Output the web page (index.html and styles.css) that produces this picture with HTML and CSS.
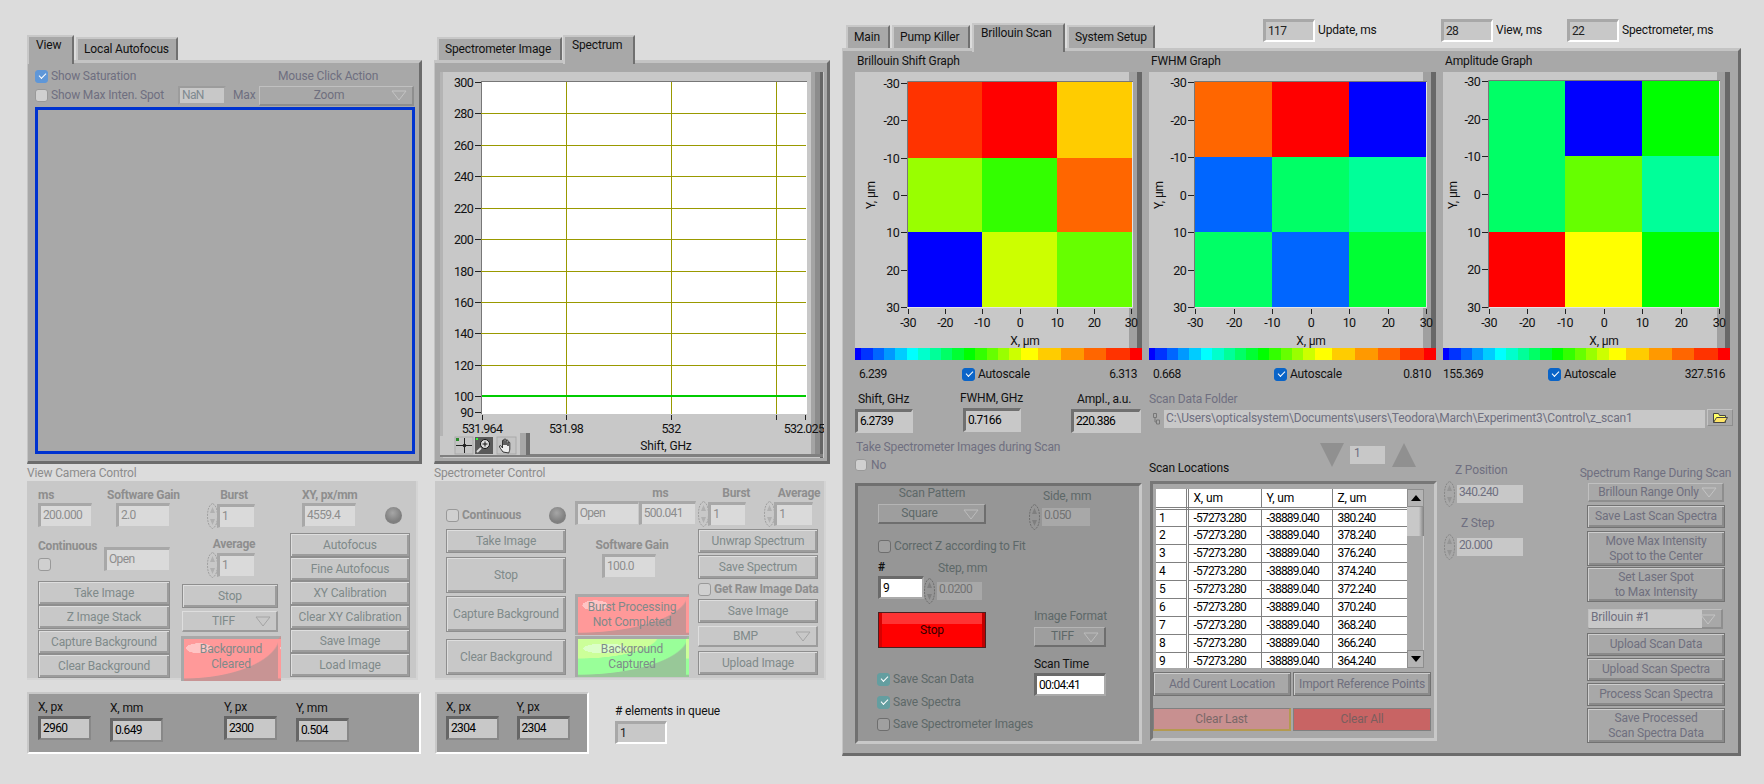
FILE: index.html
```html
<!DOCTYPE html>
<html lang="en">
  <head>
    <meta charset="UTF-8" />
    <title>Brillouin Scan</title>
    <link rel="stylesheet" href="styles.css">
  </head>
  <body>
    <svg class="defs">
      <symbol id="spinner" viewBox="0 0 11 26">
        <path d="M5.5 .5C2 2 .5 7 .5 13s1.500 11 5 12.500c3.500-1.500 5-6.500 5-12.500S9 2 5.500 .5z" fill="none" stroke="currentColor" stroke-dasharray="2 1"/>
        <path d="M5.500 4 3 10h5zM3 16l2.500 6L8 16z" fill="currentColor" opacity=".6"/>
      </symbol>
      <symbol id="drop" viewBox="0 0 16 11">
        <path d="M1 1h14L8 10z" fill="none" stroke="currentColor"/>
      </symbol>
    </svg>
    <div class="page">

      <!-- camera column -->
      <div class="col-view">
        <div class="tabs">
          <div class="tab sel tab-view">View</div>
          <div class="tab tab-focus">Local Autofocus</div>
        </div>
        <div class="tabpanel view-panel">
          <div class="view-row1">
            <div class="chk-line off-txt sat-line"><span class="check on blue"></span>Show Saturation</div>
            <div class="off-txt mouse-lab">Mouse Click Action</div>
          </div>
          <div class="view-row2">
            <div class="chk-line off-txt spot-line"><span class="check"></span>Show Max Inten. Spot</div>
            <div class="field f-nan">NaN</div>
            <div class="off-txt max-lab">Max</div>
            <div class="menu gr m-zoom">Zoom<svg class="drop"><use href="#drop"/></svg></div>
          </div>
          <div class="camera-frame"></div>
        </div>

        <div class="sect-lab">View Camera Control</div>
        <div class="ctrl cam-ctrl">
          <div class="cam-a">
            <div class="cam-a1">
              <div class="g-ms"><div class="blab">ms</div><div class="field f-54">200.000</div></div>
              <div class="g-gain"><div class="blab">Software Gain</div><div class="field f-54 gain-f">2.0</div></div>
            </div>
            <div class="cam-a2">
              <div class="g-cont"><div class="blab">Continuous</div><span class="check"></span></div>
              <div class="field f-open">Open</div>
            </div>
            <div class="btn b24">Take Image</div>
            <div class="btn b24">Z Image Stack</div>
            <div class="btn b24 mt1">Capture Background</div>
            <div class="btn b24">Clear Background</div>
          </div>
          <div class="cam-b">
            <div class="blab center">Burst</div>
            <div class="spin-row"><svg class="spin"><use href="#spinner"/></svg><div class="field f-38">1</div></div>
            <div class="blab center avg-lab">Average</div>
            <div class="spin-row"><svg class="spin"><use href="#spinner"/></svg><div class="field f-38">1</div></div>
            <div class="btn b24 cam-stop">Stop</div>
            <div class="menu m-tiff">TIFF<svg class="drop"><use href="#drop"/></svg></div>
            <div class="led red led-cam">Background<br>Cleared</div>
          </div>
          <div class="cam-c">
            <div class="xy-row">
              <div><div class="blab">XY, px/mm</div><div class="field f-54">4559.4</div></div>
              <span class="lamp lamp-cam"></span>
            </div>
            <div class="btn b24">Autofocus</div>
            <div class="btn b24">Fine Autofocus</div>
            <div class="btn b24">XY Calibration</div>
            <div class="btn b24">Clear XY Calibration</div>
            <div class="btn b24">Save Image</div>
            <div class="btn b24">Load Image</div>
          </div>
        </div>

        <div class="readout r-view">
          <div class="ro-g g1"><div>X, px</div><div class="field dark">2960</div></div>
          <div class="ro-g g2"><div>X, mm</div><div class="field dark">0.649</div></div>
          <div class="ro-g g3"><div>Y, px</div><div class="field dark">2300</div></div>
          <div class="ro-g g2"><div>Y, mm</div><div class="field dark">0.504</div></div>
        </div>
      </div>

      <!-- spectrometer column -->
      <div class="col-spec">
        <div class="tabs">
          <div class="tab tab-simg">Spectrometer Image</div>
          <div class="tab sel tab-spec">Spectrum</div>
        </div>
        <div class="tabpanel spec-panel">
          <svg class="plot-spec" viewBox="440 72 384 386">
            <rect x="440" y="72" width="384" height="386" fill="#c8c8c8"/>
            <rect x="440" y="72" width="3" height="386" fill="#b4b4b4"/>
            <rect x="811" y="72" width="4" height="384" fill="#a4a4a4"/>
            <rect x="815" y="72" width="5" height="384" fill="#8c8c8c"/>
            <rect x="820" y="72" width="3" height="386" fill="#666"/>
            <rect x="440" y="454" width="383" height="3" fill="#808080"/>
            <rect x="481" y="81" width="326" height="333" fill="#fff"/>
            <path d="M481 81.500H807M481.500 81V414" stroke="#777" fill="none"/>
            <path class="gridline" d="M481 113.500H806M481 145.500H806M481 176.500H806M481 208.500H806M481 239.500H806M481 271.500H806M481 302.500H806M481 333.500H806M481 365.500H806M566.500 82V414M671.500 82V414M776.500 82V414"/>
            <path d="M482 396H806" stroke="#00cc00" stroke-width="2"/>
            <path class="tick" d="M475 82.500h6M475 113.500h6M475 145.500h6M475 176.500h6M475 208.500h6M475 239.500h6M475 271.500h6M475 302.500h6M475 333.500h6M475 365.500h6M475 396.500h6M475 412.500h6M482.500 415v5M566.500 415v5M671.500 415v5M776.500 415v5M805.500 415v5"/>
            <g class="ax end">
              <text x="473" y="87">300</text><text x="473" y="118">280</text><text x="473" y="150">260</text>
              <text x="473" y="181">240</text><text x="473" y="213">220</text><text x="473" y="244">200</text>
              <text x="473" y="276">180</text><text x="473" y="307">160</text><text x="473" y="338">140</text>
              <text x="473" y="370">120</text><text x="473" y="401">100</text><text x="473" y="417">90</text>
            </g>
            <g class="ax mid">
              <text x="482" y="433">531.964</text><text x="566" y="433">531.98</text>
              <text x="671" y="433">532</text><text x="804" y="433">532.025</text>
            </g>
            <text class="ax-word" x="666" y="450">Shift, GHz</text>
            <!-- graph palette -->
            <rect x="440" y="436" width="90" height="19" fill="#c8c8c8"/>
            <rect x="520" y="433" width="6" height="22" fill="#a8a8a8"/>
            <rect x="526" y="433" width="4" height="22" fill="#707070"/>
            <rect x="455" y="437" width="18" height="17" fill="#c4c4c4" stroke="#aaa"/>
            <path d="M456 445.500h16M464.500 438v15" stroke="#222"/><circle cx="464.500" cy="445.500" r="1.800" fill="#222"/>
            <rect x="456" y="438" width="3" height="3" fill="#2a8a2a"/>
            <rect x="475" y="437" width="18" height="17" fill="#5a5a5a"/>
            <circle cx="485" cy="444" r="4.500" fill="#ddd" stroke="#111"/>
            <path d="M482.500 444h5M485 441.500v5" stroke="#111"/><path d="M481 448l-4 4" stroke="#ddd" stroke-width="2"/>
            <rect x="476" y="438" width="2" height="2" fill="#3f3"/>
            <rect x="497" y="437" width="19" height="17" fill="#c4c4c4" stroke="#aaa"/>
            <path d="M503 452c-2-3-4-5-3.500-6 .5-1 2 0 3 2v-7c0-1.500 1.500-1.500 1.500 0v4-5c0-1.500 2-1.500 2 0v5-4c0-1.500 2-1.500 2 0v5-3c0-1.500 1.800-1.500 1.800 0v6c0 2-1 3-1 4z" fill="#eee" stroke="#222" stroke-width=".9"/>
          </svg>
        </div>

        <div class="sect-lab">Spectrometer Control</div>
        <div class="ctrl spec-ctrl">
          <div class="spec-top">
            <div class="st-a">
              <span class="check"></span><span class="blab cont-lab">Continuous</span><span class="lamp lamp-spec"></span>
            </div>
            <div class="st-b">
              <div class="blab ms-lab">ms</div>
              <div class="st-fields"><div class="field f-open2">Open</div><div class="field f-500">500.041</div></div>
            </div>
            <div class="st-c">
              <div class="blab center">Burst</div>
              <div class="spin-row"><svg class="spin"><use href="#spinner"/></svg><div class="field f-38">1</div></div>
            </div>
            <div class="st-d">
              <div class="blab center">Average</div>
              <div class="spin-row"><svg class="spin"><use href="#spinner"/></svg><div class="field f-38 f-39">1</div></div>
            </div>
          </div>
          <div class="spec-bot">
            <div class="sb-a">
              <div class="btn b24">Take Image</div>
              <div class="btn b36 sb-stop">Stop</div>
              <div class="btn b36 sb-cap">Capture Background</div>
              <div class="btn b36 sb-clr">Clear Background</div>
            </div>
            <div class="sb-b">
              <div class="blab center sg-lab">Software Gain</div>
              <div class="field f-54 sg-f">100.0</div>
              <div class="led red led-burst">Burst Processing<br>Not Completed</div>
              <div class="led green led-bg">Background<br>Captured</div>
            </div>
            <div class="sb-c">
              <div class="btn b24">Unwrap Spectrum</div>
              <div class="btn b24 mt2">Save Spectrum</div>
              <div class="raw-line"><span class="check"></span><span class="blab">Get Raw Image Data</span></div>
              <div class="btn b24">Save Image</div>
              <div class="menu m-bmp">BMP<svg class="drop"><use href="#drop"/></svg></div>
              <div class="btn b24 up-img">Upload Image</div>
            </div>
          </div>
        </div>

        <div class="spec-foot">
          <div class="readout r-spec">
            <div class="ro-g g1"><div>X, px</div><div class="field dark">2304</div></div>
            <div class="ro-g g1b"><div>Y, px</div><div class="field dark">2304</div></div>
          </div>
          <div class="queue">
            <div># elements in queue</div>
            <div class="field top-f q-f">1</div>
          </div>
        </div>
      </div>

      <!-- scan column -->
      <div class="col-main">
        <div class="main-head">
          <div class="tabs main-tabs">
            <div class="tab tab-main">Main</div>
            <div class="tab tab-pump">Pump Killer</div>
            <div class="tab sel tab-bs">Brillouin Scan</div>
            <div class="tab tab-sys">System Setup</div>
          </div>
          <div class="timers">
            <div class="field top-f t1">117</div><span class="t-lab l1">Update, ms</span>
            <div class="field top-f t2">28</div><span class="t-lab l2">View, ms</span>
            <div class="field top-f t3">22</div><span class="t-lab">Spectrometer, ms</span>
          </div>
        </div>
        <div class="tabpanel main-panel">
          <div class="graphs">
            <div class="graph">
              <div class="g-title">Brillouin Shift Graph</div>
              <svg class="heat" viewBox="855 72 287 276">
                <rect x="855" y="72" width="287" height="276" fill="#c8c8c8"/>
                <rect x="1129" y="72" width="8" height="276" fill="#a0a0a0"/><rect x="1137" y="72" width="5" height="276" fill="#686868"/>
                <rect x="907" y="82" width="75" height="76" fill="#f30"/><rect x="982" y="82" width="75" height="76" fill="#f00"/><rect x="1057" y="82" width="75" height="76" fill="#fc0"/>
                <rect x="907" y="158" width="75" height="74" fill="#9f0"/><rect x="982" y="158" width="75" height="74" fill="#3f0"/><rect x="1057" y="158" width="75" height="74" fill="#f60"/>
                <rect x="907" y="232" width="75" height="75" fill="#00f"/><rect x="982" y="232" width="75" height="75" fill="#cf0"/><rect x="1057" y="232" width="75" height="75" fill="#6f0"/>
                <path d="M907.500 308V81.500H1133" fill="none" stroke="#777"/><path d="M1132.500 82V307.500H907" fill="none" stroke="#e4e4e4"/>
                <path class="tick" d="M901 83.500h6M901 120.500h6M901 158.500h6M901 195.500h6M901 232.500h6M901 270.500h6M901 307.500h6M908.500 309v5M945.500 309v5M982.500 309v5M1020.500 309v5M1057.500 309v5M1094.500 309v5M1131.500 309v5"/>
                <g class="ax end"><text x="899" y="88">-30</text><text x="899" y="125">-20</text><text x="899" y="163">-10</text><text x="899" y="200">0</text><text x="899" y="237">10</text><text x="899" y="275">20</text><text x="899" y="312">30</text></g>
                <g class="ax mid"><text x="908" y="327">-30</text><text x="945" y="327">-20</text><text x="982" y="327">-10</text><text x="1020" y="327">0</text><text x="1057" y="327">10</text><text x="1094" y="327">20</text><text x="1131" y="327">30</text></g>
                <text class="ax-word" x="1025" y="345">X, μm</text>
                <text class="ax-word" x="875" y="195" transform="rotate(-90 875 195)">Y, μm</text>
              </svg>
              <div class="colorbar"></div>
              <div class="scale"><span class="sc-min sc1">6.239</span><span class="chk-line"><span class="check on deep"></span>Autoscale</span><span class="sc-max">6.313</span></div>
            </div>
            <div class="graph">
              <div class="g-title">FWHM Graph</div>
              <svg class="heat" viewBox="1149 72 287 276">
                <rect x="1149" y="72" width="287" height="276" fill="#c8c8c8"/>
                <rect x="1423" y="72" width="8" height="276" fill="#a0a0a0"/><rect x="1431" y="72" width="5" height="276" fill="#686868"/>
                <rect x="1195" y="82" width="77" height="75" fill="#f60"/><rect x="1272" y="82" width="77" height="75" fill="#f00"/><rect x="1349" y="82" width="77" height="75" fill="#00f"/>
                <rect x="1195" y="157" width="77" height="75" fill="#06f"/><rect x="1272" y="157" width="77" height="75" fill="#0f6"/><rect x="1349" y="157" width="77" height="75" fill="#0f9"/>
                <rect x="1195" y="232" width="77" height="75" fill="#0f6"/><rect x="1272" y="232" width="77" height="75" fill="#06f"/><rect x="1349" y="232" width="77" height="75" fill="#0f3"/>
                <path d="M1194.500 308V81.500H1427" fill="none" stroke="#777"/><path d="M1426.500 82V307.500H1195" fill="none" stroke="#e4e4e4"/>
                <path class="tick" d="M1188 82.500h6M1188 120.500h6M1188 157.500h6M1188 195.500h6M1188 232.500h6M1188 270.500h6M1188 307.500h6M1195.500 309v5M1234.500 309v5M1272.500 309v5M1311.500 309v5M1349.500 309v5M1388.500 309v5M1426.500 309v5"/>
                <g class="ax end"><text x="1186" y="87">-30</text><text x="1186" y="125">-20</text><text x="1186" y="162">-10</text><text x="1186" y="200">0</text><text x="1186" y="237">10</text><text x="1186" y="275">20</text><text x="1186" y="312">30</text></g>
                <g class="ax mid"><text x="1195" y="327">-30</text><text x="1234" y="327">-20</text><text x="1272" y="327">-10</text><text x="1311" y="327">0</text><text x="1349" y="327">10</text><text x="1388" y="327">20</text><text x="1426" y="327">30</text></g>
                <text class="ax-word" x="1311" y="345">X, μm</text>
                <text class="ax-word" x="1163" y="195" transform="rotate(-90 1163 195)">Y, μm</text>
              </svg>
              <div class="colorbar"></div>
              <div class="scale"><span class="sc-min sc2">0.668</span><span class="chk-line"><span class="check on deep"></span>Autoscale</span><span class="sc-max">0.810</span></div>
            </div>
            <div class="graph">
              <div class="g-title">Amplitude Graph</div>
              <svg class="heat" viewBox="1443 72 287 276">
                <rect x="1443" y="72" width="287" height="276" fill="#c8c8c8"/>
                <rect x="1717" y="72" width="8" height="276" fill="#a0a0a0"/><rect x="1725" y="72" width="5" height="276" fill="#686868"/>
                <rect x="1489" y="81" width="76" height="75" fill="#0f6"/><rect x="1565" y="81" width="77" height="75" fill="#00f"/><rect x="1642" y="81" width="77" height="75" fill="#0f0"/>
                <rect x="1489" y="156" width="76" height="76" fill="#0f6"/><rect x="1565" y="156" width="77" height="76" fill="#6f0"/><rect x="1642" y="156" width="77" height="76" fill="#0f9"/>
                <rect x="1489" y="232" width="76" height="75" fill="#f00"/><rect x="1565" y="232" width="77" height="75" fill="#ff0"/><rect x="1642" y="232" width="77" height="75" fill="#0f0"/>
                <path d="M1488.500 308V80.500H1720" fill="none" stroke="#777"/><path d="M1719.500 81V307.500H1489" fill="none" stroke="#e4e4e4"/>
                <path class="tick" d="M1482 81.500h6M1482 119.500h6M1482 156.500h6M1482 194.500h6M1482 232.500h6M1482 269.500h6M1482 307.500h6M1489.500 309v5M1527.500 309v5M1565.500 309v5M1604.500 309v5M1642.500 309v5M1681.500 309v5M1719.500 309v5"/>
                <g class="ax end"><text x="1480" y="86">-30</text><text x="1480" y="124">-20</text><text x="1480" y="161">-10</text><text x="1480" y="199">0</text><text x="1480" y="237">10</text><text x="1480" y="274">20</text><text x="1480" y="312">30</text></g>
                <g class="ax mid"><text x="1489" y="327">-30</text><text x="1527" y="327">-20</text><text x="1565" y="327">-10</text><text x="1604" y="327">0</text><text x="1642" y="327">10</text><text x="1681" y="327">20</text><text x="1719" y="327">30</text></g>
                <text class="ax-word" x="1604" y="345">X, μm</text>
                <text class="ax-word" x="1457" y="195" transform="rotate(-90 1457 195)">Y, μm</text>
              </svg>
              <div class="colorbar"></div>
              <div class="scale"><span class="sc-min sc3">155.369</span><span class="chk-line"><span class="check on deep"></span>Autoscale</span><span class="sc-max">327.516</span></div>
            </div>
          </div>

          <div class="lower">
            <div class="lower-l">
              <div class="shift-row">
                <div class="sr g-shift"><div>Shift, GHz</div><div class="field gray-f">6.2739</div></div>
                <div class="sr g-fwhm"><div>FWHM, GHz</div><div class="field gray-f">0.7166</div></div>
                <div class="sr g-ampl"><div>Ampl., a.u.</div><div class="field gray-f f-ampl">220.386</div></div>
              </div>
              <div class="off-txt take-lab">Take Spectrometer Images during Scan</div>
              <div class="chk-line off-txt no-line"><span class="check"></span>No</div>

              <div class="pattern-box">
                <div class="pb-row1">
                  <div class="pb-pat">
                    <div class="dim center">Scan Pattern</div>
                    <div class="menu dk m-square">Square<svg class="drop"><use href="#drop"/></svg></div>
                  </div>
                  <div class="pb-side">
                    <div class="dim center side-lab">Side, mm</div>
                    <div class="spin-row"><svg class="spin dim-s"><use href="#spinner"/></svg><div class="field dk-f f-side">0.050</div></div>
                  </div>
                </div>
                <div class="chk-line dim pb-corr"><span class="check dk-c"></span>Correct Z according to Fit</div>
                <div class="pb-row3">
                  <div class="pb-n">
                    <div class="hash">#</div>
                    <div class="field white-f f-n">9</div>
                  </div>
                  <div class="pb-step">
                    <div class="dim step-lab">Step, mm</div>
                    <div class="spin-row"><svg class="spin dim-s"><use href="#spinner"/></svg><div class="field dk-f f-step">0.0200</div></div>
                  </div>
                </div>
                <div class="pb-row4">
                  <div class="pb-left">
                    <div class="stop-btn">Stop</div>
                    <div class="chk-line dim sv1"><span class="check on teal"></span>Save Scan Data</div>
                    <div class="chk-line dim sv2"><span class="check on teal"></span>Save Spectra</div>
                    <div class="chk-line dim sv3"><span class="check dk-c"></span>Save Spectrometer Images</div>
                  </div>
                  <div class="pb-right">
                    <div class="dim if-lab">Image Format</div>
                    <div class="menu dk m-if">TIFF<svg class="drop"><use href="#drop"/></svg></div>
                    <div class="st-lab">Scan Time</div>
                    <div class="field white-f f-time">00:04:41</div>
                  </div>
                </div>
              </div>
            </div>

            <div class="lower-r">
              <div class="off-txt">Scan Data Folder</div>
              <div class="path-row">
                <svg class="path-ic" viewBox="0 0 8 12"><path d="M.5 .5h3v4h-3zM3.500 7h3v4h-3zM2 4.500V9h1.500" fill="none" stroke="#777"/></svg>
                <div class="path-f">C:\Users\opticalsystem\Documents\users\Teodora\March\Experiment3\Control\z_scan1</div>
                <div class="path-btn"><svg class="folder" viewBox="0 0 15 11"><path d="M.5 10.500V1.500h5l1 2h6v7z" fill="#ffff66" stroke="#444"/><path d="M.5 10.500l3-5h11l-3 5z" fill="#ffe566" stroke="#444"/></svg></div>
              </div>
              <div class="lr-cols">
                <div class="tbl-col">
                  <div class="tbl-head">
                    <div class="tbl-lab">Scan Locations</div>
                    <div class="pager">
                      <svg class="pg" viewBox="0 0 24 24"><path d="M0 0h24L12 24z" fill="#909090"/></svg>
                      <div class="field pg-f">1</div>
                      <svg class="pg" viewBox="0 0 24 24"><path d="M0 24h24L12 0z" fill="#909090"/></svg>
                    </div>
                  </div>
                  <div class="tbl-frame">
                    <div class="tbl-wrap">
                      <div class="tbl-clip">
                        <table class="locs">
                          <thead><tr><th class="c0"></th><th class="c1">X, um</th><th class="c2">Y, um</th><th class="c3">Z, um</th></tr></thead>
                          <tbody>
                            <tr><td>1</td><td>-57273.280</td><td>-38889.040</td><td>380.240</td></tr>
                            <tr><td>2</td><td>-57273.280</td><td>-38889.040</td><td>378.240</td></tr>
                            <tr><td>3</td><td>-57273.280</td><td>-38889.040</td><td>376.240</td></tr>
                            <tr><td>4</td><td>-57273.280</td><td>-38889.040</td><td>374.240</td></tr>
                            <tr><td>5</td><td>-57273.280</td><td>-38889.040</td><td>372.240</td></tr>
                            <tr><td>6</td><td>-57273.280</td><td>-38889.040</td><td>370.240</td></tr>
                            <tr><td>7</td><td>-57273.280</td><td>-38889.040</td><td>368.240</td></tr>
                            <tr><td>8</td><td>-57273.280</td><td>-38889.040</td><td>366.240</td></tr>
                            <tr><td>9</td><td>-57273.280</td><td>-38889.040</td><td>364.240</td></tr>
                          </tbody>
                        </table>
                      </div>
                      <div class="scrollbar">
                        <div class="sb-arrow"><svg viewBox="0 0 10 6"><path d="M5 0l5 6H0z" fill="#000"/></svg></div>
                        <div class="sb-thumb"></div>
                        <div class="sb-track"></div>
                        <div class="sb-arrow"><svg viewBox="0 0 10 6"><path d="M5 6l5-6H0z" fill="#000"/></svg></div>
                      </div>
                    </div>
                    <div class="tbl-btns">
                      <div class="btn gr tb-b">Add Curent Location</div>
                      <div class="btn gr tb-b">Import Reference Points</div>
                    </div>
                    <div class="tbl-btns clr-row">
                      <div class="btn tb-b clr-last">Clear Last</div>
                      <div class="btn tb-b clr-all">Clear All</div>
                    </div>
                  </div>
                </div>
                <div class="z-col">
                  <div class="off-txt zp-lab">Z Position</div>
                  <div class="spin-row"><svg class="spin gr-s"><use href="#spinner"/></svg><div class="field z-f">340.240</div></div>
                  <div class="off-txt zs-lab">Z Step</div>
                  <div class="spin-row"><svg class="spin gr-s"><use href="#spinner"/></svg><div class="field z-f">20.000</div></div>
                </div>
                <div class="range-col">
                  <div class="off-txt center range-lab">Spectrum Range During Scan</div>
                  <div class="menu gr m-range">Brilloun Range Only<svg class="drop"><use href="#drop"/></svg></div>
                  <div class="btn gr b23 mt3">Save Last Scan Spectra</div>
                  <div class="btn gr b35 mt3">Move Max Intensity<br>Spot to the Center</div>
                  <div class="btn gr b35 mt1">Set Laser Spot<br>to Max Intensity</div>
                  <div class="menu gr m-bri"><span class="bri-f">Brillouin #1</span><svg class="drop"><use href="#drop"/></svg></div>
                  <div class="btn gr b23 mt4">Upload Scan Data</div>
                  <div class="btn gr b23 mt2">Upload Scan Spectra</div>
                  <div class="btn gr b23 mt2">Process Scan Spectra</div>
                  <div class="btn gr b35 mt2">Save Processed<br>Scan Spectra Data</div>
                </div>
              </div>
            </div>
          </div>
        </div>
      </div>
    </div>
  </body>
</html>
```

FILE: styles.css
```css
* {
  box-sizing: border-box;
}
html, body {
  margin: 0;
  height: 784px;
  overflow: hidden;
  background: #dcdcdc;
}
body {
  font: 12px/15px Roboto, sans-serif;
  letter-spacing: -.15px;
  color: #111;
}
.defs {
  display: none;
}
.page {
  display: flex;
  padding-left: 27px;
  width: 1764px;
}
.col-view {
  width: 395px;
  margin-right: 12px;
  padding-top: 35px;
}
.col-spec {
  width: 396px;
  margin-right: 12px;
  padding-top: 35px;
}
.col-main {
  width: 899px;
  padding-top: 19px;
}
.center {
  text-align: center;
}

/* tabs */
.tabs {
  display: flex;
  align-items: flex-end;
  height: 25px;
  position: relative;
  z-index: 1;
}
.tab {
  height: 23px;
  padding: 3px 0 0 6px;
  background: #a8a8a8;
  border-top: 2px solid #c8c8c8;
  border-left: 2px solid #c8c8c8;
  border-right: 2px solid #707070;
  margin-right: 2px;
  white-space: nowrap;
}
.tab.sel {
  height: 29px;
  margin-bottom: -4px;
  padding: 1px 0 0 7px;
}
.tab-view { width: 47px; }
.tab-focus { width: 102px; }
.tab-simg { width: 125px; margin-left: 3px; margin-right: 1px; }
.tab-spec { width: 72px; }
.tab-main { width: 44px; }
.tab-pump { width: 78px; }
.tab-bs { width: 93px; }
.tab-sys { width: 88px; }
.main-tabs {
  height: 29px;
  margin-left: 4px;
}
.tabpanel {
  background: #a8a8a8;
  border-top: 3px solid #c4c4c4;
  border-left: 1px solid #c4c4c4;
  border-right: 3px solid #6c6c6c;
  border-bottom: 3px solid #6c6c6c;
}

/* labels */
.off-txt {
  color: #6f6f80;
}
.blab {
  font-weight: 700;
  color: #8e8e8e;
  font-size: 12px;
  letter-spacing: -.25px;
  white-space: nowrap;
}
.dim {
  color: #5d6868;
}
.sect-lab {
  height: 17px;
  padding-top: 2px;
  color: #8c8c8c;
}
.chk-line {
  display: flex;
  align-items: center;
  white-space: nowrap;
}

/* small widgets */
.check {
  flex: none;
  display: block;
  position: relative;
  width: 13px;
  height: 13px;
  margin-right: 3px;
  border: 1px solid #999;
  border-radius: 3px;
  background: #d0d0d0;
}
.check.on::after {
  content: "";
  position: absolute;
  left: 3px;
  top: 2px;
  width: 6px;
  height: 3px;
  border-left: 1px solid #fff;
  border-bottom: 1px solid #fff;
  transform: rotate(-45deg);
}
.check.blue { background: #5f97d8; border-color: #5f97d8; }
.check.deep { background: #0a64c8; border-color: #0a64c8; }
.check.teal { background: #649ea0; border-color: #649ea0; }
.check.dk-c { background: #a0a0a0; border-color: #6e6e6e; }

.field {
  height: 24px;
  padding: 2px 0 0 2px;
  background: #dadada;
  color: #8d8d8d;
  border-style: solid;
  border-width: 3px 1px 1px 3px;
  border-color: #a8a8a8 #c8c8c8 #c8c8c8 #a8a8a8;
  white-space: nowrap;
  overflow: hidden;
  font-size: 12px;
  letter-spacing: -.65px;
}
.field.dark {
  background: #c8c8c8;
  color: #000;
  border-width: 3px 2px 2px 3px;
  border-color: #666 #888 #888 #666;
  width: 53px;
}
.field.top-f {
  background: #c8c8c8;
  color: #222;
  width: 52px;
  height: 23px;
  border-width: 3px 2px 2px 3px;
  border-color: #a8a8a8 #fff #fff #a8a8a8;
}
.field.gray-f {
  width: 58px;
  background: #c8c8c8;
  color: #000;
  border-width: 3px 2px 2px 3px;
  border-color: #707070 #c8c8c8 #c8c8c8 #707070;
}
.field.white-f {
  background: #fff;
  color: #000;
  border-width: 3px 2px 2px 3px;
  border-color: #6a6a6a #aaa #aaa #6a6a6a;
}
.field.dk-f {
  height: 18px;
  padding-top: 0;
  background: #a8a8a8;
  color: #727272;
  border-width: 0;
}
.f-54 { width: 54px; }
.f-38 { width: 38px; }
.f-39 { width: 39px; }
.spin {
  flex: none;
  display: block;
  width: 11px;
  height: 26px;
  margin-right: -1px;
  color: #a0a0a0;
}
.spin.dim-s { color: #6f6f6f; }
.spin.gr-s { color: #888; margin-right: 2px; }
.spin-row {
  display: flex;
  align-items: center;
}
.drop {
  position: absolute;
  right: 5px;
  top: 50%;
  margin-top: -5px;
  width: 16px;
  height: 11px;
  color: #a4a4a4;
}
.lamp {
  display: block;
  flex: none;
  width: 17px;
  height: 17px;
  border-radius: 50%;
  background: radial-gradient(circle at 45% 35%, #a6a6a6, #7f7f7f 60%);
}

/* buttons */
.btn {
  display: flex;
  align-items: center;
  justify-content: center;
  text-align: center;
  line-height: 15px;
  background: #c8c8c8;
  color: #7f8a8a;
  border: 1px solid #8e8e8e;
  box-shadow: inset 1px 1px 0 #dedede, inset -2px -2px 0 #9c9c9c;
  white-space: nowrap;
}
.btn.gr {
  background: #a8a8a8;
  color: #6f6f7e;
  border-color: #727272;
  box-shadow: inset 1px 1px 0 #cecece, inset -2px -2px 0 #8a8a8a;
}
.b24 { height: 24px; }
.b36 { height: 36px; }
.b23 { height: 23px; }
.b35 { height: 35px; }
.mt1 { margin-top: 1px; }
.mt2 { margin-top: 2px; }
.mt3 { margin-top: 3px; }
.mt4 { margin-top: 4px; }
.menu {
  position: relative;
  background: #c8c8c8;
  color: #7f8a8a;
  border-top: 1px solid #dedede;
  border-left: 1px solid #dedede;
  border-right: 2px solid #9c9c9c;
  border-bottom: 2px solid #9c9c9c;
  display: flex;
  align-items: center;
  justify-content: center;
  white-space: nowrap;
}
.menu.gr {
  background: #a8a8a8;
  color: #6f6f7e;
  border-color: #c0c0c0 #8e8e8e #8e8e8e #c0c0c0;
}
.menu.gr .drop { color: #c4c4c4; }
.menu.dk {
  background: #9e9e9e;
  color: #5d6868;
  border-color: #b4b4b4 #6e6e6e #6e6e6e #b4b4b4;
}
.menu.dk .drop { color: #bcbcbc; }
.led {
  text-align: center;
  line-height: 15px;
  color: #7f8a8a;
  border-style: solid;
  border-width: 3px 3px 0 3px;
  border-color: #a8a8a8 transparent transparent #a8a8a8;
  padding-top: 3px;
}
.led.red {
  background:
    radial-gradient(ellipse 13px 5px at 16% 22%, #ffc4c4 98%, transparent),
    radial-gradient(ellipse 103% 105% at 0 -10%, #ff9999 98%, transparent),
    #c89494;
}
.led.green {
  background:
    radial-gradient(ellipse 22px 5px at 25% 25%, #dbffc8 98%, transparent),
    radial-gradient(ellipse 75% 62% at 0 -10%, #ccff99 98%, transparent),
    radial-gradient(ellipse 103% 105% at 0 -10%, #99ff99 98%, transparent),
    #98c898;
}

/* camera panel */
.view-panel {
  height: 404px;
  padding: 6px 0 0 7px;
}
.view-row1 {
  display: flex;
  height: 15px;
}
.sat-line { width: 243px; }
.view-row2 {
  display: flex;
  align-items: center;
  height: 21px;
  margin-top: 1px;
}
.spot-line { width: 143px; flex: none; }
.f-nan {
  width: 48px;
  height: 19px;
  padding-top: 0;
  background: #c8c8c8;
  color: #7f8a90;
  border-width: 2px;
  border-color: #9c9c9c #a8a8a8 #a8a8a8 #9c9c9c;
}
.max-lab { width: 33px; padding-left: 7px; }
.m-zoom {
  width: 155px;
  height: 20px;
  padding-right: 14px;
}
.camera-frame {
  width: 380px;
  height: 347px;
  margin-top: 1px;
  border: 3px solid #0033d0;
}

/* control blocks */
.ctrl {
  width: 391px;
  height: 199px;
  background: #c8c8c8;
  border-right: 2px solid #d4d4d4;
  border-bottom: 2px solid #d4d4d4;
}
.cam-ctrl {
  display: grid;
  grid-template-columns: 132px 96px 120px;
  column-gap: 12px;
  padding: 7px 0 0 11px;
}
.cam-a1 {
  display: flex;
  height: 41px;
}
.g-ms { width: 78px; flex: none; }
.g-gain { flex: none; width: 54px; }
.g-gain .blab { margin-left: -9px; }
.cam-a2 {
  display: flex;
  height: 52px;
  padding-top: 10px;
}
.g-cont { width: 66px; flex: none; }
.g-cont .check { margin-top: 4px; }
.f-open { width: 66px; margin-top: 8px; }
.cam-b {
  display: flex;
  flex-direction: column;
}
.cam-b .spin-row { padding-left: 25px; height: 26px; }
.avg-lab { margin-top: 8px; padding-left: 8px; }
.cam-b .blab.center { padding-left: 8px; }
.cam-stop { margin-top: 6px; }
.m-tiff {
  height: 21px;
  margin-top: 3px;
  padding-right: 12px;
}
.led-cam {
  width: 100px;
  height: 45px;
  margin: 4px 0 0 -1px;
}
.xy-row {
  display: flex;
  height: 45px;
  padding-left: 12px;
}
.lamp-cam { margin: 19px 0 0 28px; }

.readout {
  background: #999;
  border-style: solid;
  border-width: 2px;
  border-color: #c8c8c8 #fff #fff #c8c8c8;
  height: 62px;
  display: flex;
  padding-top: 6px;
}
.r-view {
  width: 394px;
  margin-top: 12px;
  padding-left: 9px;
}
.r-spec {
  width: 154px;
  padding-left: 9px;
}
.ro-g { width: 72px; }
.ro-g .field { margin-top: 1px; }
.ro-g.g2 .field { margin-top: 2px; }
.ro-g.g2 div:first-child { padding-top: 1px; }
.g1 { width: 72px; }
.g2 { width: 114px; }
.g3 { width: 72px; }
.g1b { width: 72px; }
.ro-g.g2:last-child { width: 60px; }

/* spectrum */
.spec-panel {
  height: 404px;
  padding: 9px 0 0 5px;
}
.plot-spec {
  display: block;
  width: 384px;
  height: 386px;
}
.ax text {
  font-size: 12.500px;
  letter-spacing: -.7px;
  fill: #111;
}
.ax-word {
  font-size: 12px;
  fill: #111;
  text-anchor: middle;
}
.ax.end { text-anchor: end; }
.ax.mid { text-anchor: middle; }
.gridline {
  stroke: #999900;
  fill: none;
}
.tick {
  stroke: #222;
  fill: none;
}
.spec-ctrl {
  padding: 5px 0 0 11px;
  margin-left: 1px;
}
.spec-top {
  display: flex;
  height: 43px;
}
.st-a {
  display: flex;
  align-items: center;
  width: 129px;
  padding-top: 15px;
}
.cont-lab { width: 87px; }
.st-b { width: 124px; }
.ms-lab { text-align: right; padding-right: 30px; }
.st-fields {
  display: flex;
}
.f-open2 { width: 64px; }
.f-500 { width: 57px; }
.st-c { width: 66px; }
.st-d { width: 60px; }
.st-c .blab, .st-d .blab { padding-left: 10px; }
.spec-bot {
  display: grid;
  grid-template-columns: 120px 114px 120px;
  column-gap: 9px;
}
.sb-stop { margin-top: 4px; }
.sb-cap { margin-top: 3px; }
.sb-clr { margin-top: 7px; }
.sg-lab { margin-top: 9px; }
.sg-f { margin: 1px 0 0 27px; }
.led-burst {
  width: 114px;
  height: 41px;
  margin-top: 16px;
}
.led-bg {
  width: 114px;
  height: 41px;
  margin-top: 1px;
}
.raw-line {
  display: flex;
  align-items: center;
  height: 20px;
}
.m-bmp {
  height: 21px;
  margin-top: 3px;
  padding-right: 24px;
}
.up-img { margin-top: 4px; }
.spec-foot {
  display: flex;
  margin: 12px 0 0 1px;
}
.queue {
  margin: 12px 0 0 26px;
}
.q-f {
  margin-top: 2px;
}

/* scan panel */
.main-head {
  display: flex;
  height: 29px;
  position: relative;
}
.timers {
  display: flex;
  align-items: flex-start;
  margin-left: 106px;
  height: 24px;
}
.t-lab { padding: 4px 0 0 3px; }
.l1 { width: 126px; }
.l2 { width: 74px; }
.main-panel {
  width: 899px;
  height: 708px;
  padding: 3px 0 0 12px;
}
.graphs {
  display: flex;
  gap: 7px;
}
.graph { width: 287px; }
.g-title {
  height: 18px;
  padding-left: 2px;
}
.heat {
  display: block;
  width: 287px;
  height: 276px;
}
.colorbar {
  height: 12px;
  background: linear-gradient(90deg,
    #00f 0 2.1%, #03f 2.1% 6.3%, #06f 6.3% 10.1%, #09f 10.1% 14%, #0cf 14% 18.200%,
    #0ff 18.200% 22%, #0fc 22% 26.200%, #0f9 26.200% 30%, #0f6 30% 33.900%, #0f3 33.900% 38.100%,
    #0f0 38.100% 41.900%, #3f0 41.900% 46.100%, #6f0 46.100% 49.900%, #9f0 49.900% 53.800%, #cf0 53.800% 58%,
    #ff0 58% 63.900%, #fc0 63.900% 71.900%, #f90 71.900% 79.900%, #f60 79.900% 87.600%, #f30 87.600% 95.700%, #f00 95.700%);
}
.scale {
  display: flex;
  align-items: center;
  height: 15px;
  margin-top: 7px;
  padding: 0 5px 0 4px;
}
.sc-min { flex: none; letter-spacing: -.5px; }
.sc-max { margin-left: auto; letter-spacing: -.5px; }
.sc1 { width: 103px; }
.sc2 { width: 121px; }
.sc3 { width: 105px; margin-left: -4px; }

.lower {
  display: flex;
  margin-top: 10px;
  gap: 7px;
}
.lower-l { width: 287px; }
.shift-row {
  display: flex;
  height: 43px;
}
.sr .field { margin-top: 2px; }
.g-shift { width: 108px; padding-left: 3px; }
.g-shift .field { margin-left: -3px; }
.g-fwhm { width: 108px; }
.g-fwhm div:first-child { margin-left: -3px; margin-top: -1px; }
.g-ampl { padding-left: 6px; }
.g-ampl .field { margin-left: -6px; }
.f-ampl.gray-f { width: 70px; }
.take-lab { margin-top: 5px; padding-left: 1px; }
.no-line { height: 14px; margin-top: 3px; }
.no-line .check { width: 12px; height: 12px; margin-right: 4px; }
.pattern-box {
  width: 287px;
  height: 261px;
  margin-top: 11px;
  background: #969696;
  border-style: solid;
  border-width: 3px;
  border-color: #707070 #c8c8c8 #c8c8c8 #707070;
  padding: 0 0 0 20px;
}
.pb-row1 {
  display: flex;
  height: 39px;
}
.pb-pat { width: 151px; }
.m-square {
  width: 108px;
  height: 20px;
  margin-top: 3px;
  padding-right: 24px;
}
.pb-pat .center { width: 108px; }
.side-lab { padding-left: 14px; margin-top: 3px; }
.f-side { width: 48px; margin-left: 3px; }
.pb-corr { margin-top: 14px; height: 14px; }
.pb-row3 {
  display: flex;
  margin-top: 7px;
  height: 43px;
}
.pb-n { width: 46px; }
.hash { font-weight: 700; }
.f-n { margin-top: 1px; width: 46px; height: 23px; }
.pb-step { width: 62px; }
.step-lab { margin-left: 14px; white-space: nowrap; margin-top: 1px; }
.pb-step .spin-row { margin-top: 2px; }
.f-step { width: 45px; margin-left: 3px; }
.pb-row4 {
  display: flex;
  margin-top: 9px;
}
.pb-left { width: 156px; }
.stop-btn {
  width: 108px;
  height: 36px;
  display: flex;
  align-items: center;
  justify-content: center;
  background: linear-gradient(#ff3333 0 33%, #ff0000 33%);
  border: 1px solid #4a2020;
  box-shadow: inset -3px 0 0 #c00000, inset 3px 0 0 #d80000;
  color: #300;
}
.sv1 { margin: 24px 0 0 -1px; height: 14px; }
.sv2 { margin: 9px 0 0 -1px; height: 14px; }
.sv3 { margin: 8px 0 0 -1px; height: 14px; }
.if-lab { margin-top: -3px; }
.m-if {
  width: 72px;
  height: 20px;
  margin-top: 3px;
  padding-right: 14px;
}
.st-lab { margin-top: 10px; }
.f-time { width: 72px; height: 23px; margin-top: 1px; }

.lower-r { width: 590px; }
.path-row {
  display: flex;
  align-items: center;
  height: 21px;
  margin-top: 1px;
}
.path-ic {
  width: 8px;
  height: 12px;
  margin: 0 3px 0 4px;
}
.path-f {
  width: 541px;
  height: 18px;
  background: #c8c8c8;
  color: #6f6f80;
  padding: 1px 0 0 2px;
  white-space: nowrap;
}
.path-btn {
  width: 26px;
  height: 17px;
  margin: -3px 0 0 2px;
  background: #a8a8a8;
  border: 1px solid;
  border-color: #c4c4c4 #8e8e8e #8e8e8e #c4c4c4;
  display: flex;
  align-items: center;
  justify-content: center;
}
.folder { width: 15px; height: 11px; }
.lr-cols {
  display: flex;
  margin-top: 14px;
}
.tbl-col { width: 288px; flex: none; }
.tbl-head {
  display: flex;
  height: 38px;
}
.tbl-lab {
  width: 171px;
  padding-top: 18px;
}
.pager {
  display: flex;
  align-items: flex-start;
}
.pg { width: 24px; height: 24px; }
.pg-f {
  width: 35px;
  height: 18px;
  margin: 3px 7px 0 6px;
  padding: 0 0 0 4px;
  background: #c8c8c8;
  color: #6f6f80;
  border: 0;
}
.tbl-frame {
  width: 287px;
  height: 260px;
  margin-left: 1px;
  border-style: solid;
  border-width: 3px;
  border-color: #777 #c8c8c8 #c8c8c8 #777;
  padding: 5px 0 0 3px;
}
.tbl-wrap {
  display: flex;
  width: 268px;
  height: 179px;
}
.tbl-clip {
  width: 251px;
  height: 179px;
  overflow: hidden;
  background: #fff;
}
.locs {
  border-collapse: collapse;
  table-layout: fixed;
  width: 251px;
  color: #000;
}
.locs th, .locs td {
  height: 18px;
  padding: 0 0 0 5px;
  line-height: 16px;
  font-weight: 400;
  text-align: left;
  border: 1px solid #808080;
  border-top: 0;
  background: #fff;
  white-space: nowrap;
}
.locs td { font-size: 12px; letter-spacing: -.8px; }
.locs th { height: 19px; border-bottom: 3px double #808080; }
.locs td:first-child, .locs th:first-child { border-left: 0; padding-left: 3px; border-right: 3px double #808080; }
.locs td:last-child, .locs th:last-child { border-right: 0; }
.c0 { width: 31px; }
.c1 { width: 74px; }
.c2 { width: 71px; }
.c3 { width: 75px; }
.scrollbar {
  width: 17px;
  height: 179px;
  display: flex;
  flex-direction: column;
}
.sb-arrow {
  height: 18px;
  background: #b4b4b4;
  border: 1px solid #8e8e8e;
  display: flex;
  align-items: center;
  justify-content: center;
}
.sb-arrow svg { width: 10px; height: 6px; }
.sb-thumb {
  height: 29px;
  background: linear-gradient(90deg, #c8c8c8 70%, #808080);
}
.sb-track {
  flex: 1;
  background: #a8a8a8;
  border-right: 1px solid #c8c8c8;
}
.tbl-btns {
  display: flex;
  margin: 4px 0 0 -3px;
  gap: 2px;
  width: 278px;
}
.tb-b {
  width: 138px;
  height: 24px;
}
.clr-row { margin-top: 12px; }
.clr-last {
  height: 23px;
  background: #c89090;
  color: #7a6868;
  border-color: #808080;
  border-bottom: 2px solid #b49a50;
  border-right: 2px solid #b49a50;
  box-shadow: none;
}
.clr-all {
  height: 23px;
  background: #c86464;
  color: #7a5e5e;
  border-color: #808080;
  box-shadow: none;
}
.z-col {
  width: 150px;
  flex: none;
  padding: 20px 0 0 7px;
}
.zp-lab { padding-left: 11px; margin-bottom: 3px; }
.zs-lab { padding-left: 17px; margin: 9px 0 3px; }
.z-f {
  width: 66px;
  height: 18px;
  padding: 0 0 0 2px;
  background: #c8c8c8;
  color: #6f6f80;
  border: 0;
}
.range-col {
  width: 138px;
  padding-top: 23px;
}
.range-lab {
  margin: 0 -8px 0 -9px;
  height: 17px;
  white-space: nowrap;
}
.m-range {
  height: 19px;
  padding-right: 14px;
  width: 136px;
  margin-left: 1px;
}
.m-bri {
  height: 20px;
  margin: 7px 0 0 1px;
  width: 135px;
  justify-content: flex-start;
}
.bri-f {
  width: 113px;
  height: 18px;
  padding-left: 2px;
  background: #c8c8c8;
}
```
